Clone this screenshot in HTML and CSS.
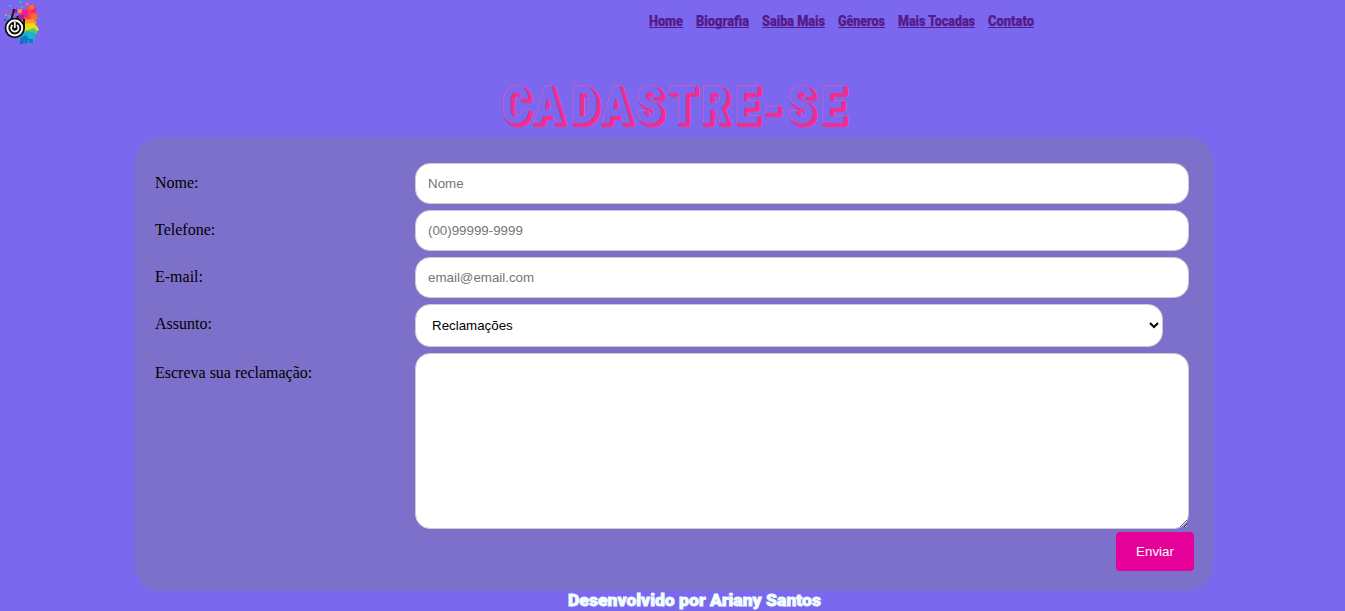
FILE: index.html
```html
<!DOCTYPE html>
<html lang="pt-BR">
<head>
<meta charset="utf-8">
<title>Cadastre-se</title>
<link rel="stylesheet" href="styles.css">
</head>
<body>
<header class="topbar">
  <svg class="logo" viewBox="0 0 40 46" aria-label="Logo">
    <path fill="#ff3d55" d="M23 9h5V5h7v5h2v9l-6 4h-9z"/>
    <path fill="#f01f91" d="M22 10h6v7h-8zM31 8h5v4h-5z"/>
    <path fill="#ff6a32" d="M29 5h5v5h-5zM30 14h7v6h-5z"/>
    <path fill="#a8228e" d="M18 15h6v8h-7zM14 9h3v4h-3z"/>
    <path fill="#ff9a1f" d="M21 20l12-1 4 4-5 4-10-1z"/>
    <path fill="#e9dc1a" d="M22 24l11-1 4 3 2 4-5 3H22z"/>
    <path fill="#55c96b" d="M25 31l9-3 4 4-3 3-9 1z"/>
    <path fill="#16b5cb" d="M19 35l8-4 8 2v5l-2 5-8 1-6-3z"/>
    <path fill="#1476c9" d="M20 38l6-3 3 4-2 5-7-2zM29 39h4v4h-4z"/>
    <path fill="#26b9e5" d="M19 1h3v2h-3zM9 5h2v2H9zM21 6h2v2h-2zM8 15h3v3H8z"/>
    <path fill="#ff8a3b" d="M18 9h4v4h-4zM26 3h2v2h-2zM5 14h2v2H5z"/>
    <path fill="#f54f8e" d="M25 4h2v2h-2zM10 12h2v2h-2zM4 9h1v2H4z"/>
    <path fill="#3457c6" d="M4 19h2v2H4zM14 18h2v3h-2zM20 41h3v3h-3z"/>
    <path fill="none" stroke="#151016" stroke-width="1.8" d="M14 9l-3 12M17.500 16v10M24 19v9"/>
    <circle cx="14.800" cy="28" r="10.200" fill="#100f13"/>
    <circle cx="14.800" cy="28" r="7.400" fill="none" stroke="#fff" stroke-width="2"/>
    <path fill="none" stroke="#fff" stroke-width="1.700" d="M12.500 25a3.700 3.700 0 1 0 4.600 0M14.800 22v6"/>
  </svg>
  <nav class="menu">
    <a class="link" style="width:34px"><svg class="word"><text y="14" textLength="34" lengthAdjust="spacingAndGlyphs">Home</text></svg></a>
    <a class="link" style="width:53px"><svg class="word"><text y="14" textLength="53" lengthAdjust="spacingAndGlyphs">Biografia</text></svg></a>
    <a class="link" style="width:63px"><svg class="word"><text y="14" textLength="63" lengthAdjust="spacingAndGlyphs">Saiba Mais</text></svg></a>
    <a class="link" style="width:47px"><svg class="word"><text y="14" textLength="47" lengthAdjust="spacingAndGlyphs">Gêneros</text></svg></a>
    <a class="link" style="width:77px"><svg class="word"><text y="14" textLength="77" lengthAdjust="spacingAndGlyphs">Mais Tocadas</text></svg></a>
    <a class="link" style="width:46px"><svg class="word"><text y="14" textLength="46" lengthAdjust="spacingAndGlyphs">Contato</text></svg></a>
  </nav>
</header>
<h1 class="title"><svg class="title-art" viewBox="0 0 350 57"><text transform="scale(.82 1)" y="43 43 43 43 43 43 43 43 46 43 43" x="2 41 86 124 166 206 245 286 320 351 391">CADASTRE-SE</text></svg></h1>
<form class="panel">
  <label class="label" for="nome">Nome:</label>
  <input class="field" id="nome" placeholder="Nome">
  <label class="label" for="tel">Telefone:</label>
  <input class="field" id="tel" placeholder="(00)99999-9999">
  <label class="label" for="email">E-mail:</label>
  <input class="field" id="email" placeholder="email@email.com">
  <label class="label" for="assunto">Assunto:</label>
  <select class="field select" id="assunto"><option>Reclamações</option></select>
  <label class="label" for="msg">Escreva sua reclamação:</label>
  <textarea class="field message" id="msg"></textarea>
  <button class="send" type="button">Enviar</button>
</form>
<footer class="footer"><svg class="credit"><text y="15" textLength="253" lengthAdjust="spacingAndGlyphs">Desenvolvido por Ariany Santos</text></svg></footer>
</body>
</html>
```
FILE: styles.css
```css
* { box-sizing: border-box; }
body { margin: 0; height: 611px; overflow: hidden; background: #7b68ee; font-family: "Liberation Serif", serif; }
.topbar { display: flex; align-items: flex-start; height: 80px; }
.logo { width: 40px; height: 46px; }
.menu { display: flex; gap: 13px; padding: 12px 0 0 609px; }
.link { display: block; height: 16px; border-bottom: 1px solid #551a8b; }
.word { display: block; width: 100%; height: 18px; overflow: visible; font: 900 14px Roboto, sans-serif; fill: #551a8b; stroke: #551a8b; stroke-width: .25px; }
.title { margin: 0; height: 57px; padding-left: 500px; }
.title-art { display: block; width: 350px; height: 57px; overflow: visible; font: 900 52px Roboto, sans-serif; }
.title-art text { fill: #7b68ee; stroke: #d957bd; stroke-width: 1.6px; paint-order: stroke; text-shadow: 1px 1px 0 #f42d8c, 2px 1px 0 #f42d8c, 3px 1px 0 #f42d8c, 4px 2px 0 #f42d8c, 1px 2px 0 #f42d8c, 2px 3px 0 #f42d8c, 3px 3px 0 #f42d8c; }
.panel { display: grid; grid-template-columns: 260px 774px; grid-template-rows: 41px 41px 41px 43px 176px 39px; row-gap: 6px; width: 1078px; height: 454px; margin-left: 135px; padding: 26px 0 0 20px; border-radius: 25px; background: #7d70ca; }
.label { padding-top: 11px; font-size: 16px; line-height: 18px; color: #000; }
.field { display: block; width: 774px; height: 100%; margin: 0; padding: 12px; border: 1px solid #ccc; border-radius: 15px; background: #fff; font: 13.333px "Liberation Sans", Arial, sans-serif; color: #000; outline: 0; }
.field::placeholder { color: #757575; }
.select { width: 748px; }
.message { resize: vertical; }
.send { grid-column: 2; justify-self: end; width: 78px; height: 39px; margin: -3px -5px 0 0; border: 0; border-radius: 4px; background: #e6009a; color: #fff; font: 13.333px "Liberation Sans", Arial, sans-serif; }
.footer { padding-left: 568px; height: 20px; }
.credit { display: block; width: 253px; height: 20px; overflow: visible; font: 900 16px Roboto, sans-serif; fill: #f0ffff; stroke: #f0ffff; stroke-width: .8px; }
```
